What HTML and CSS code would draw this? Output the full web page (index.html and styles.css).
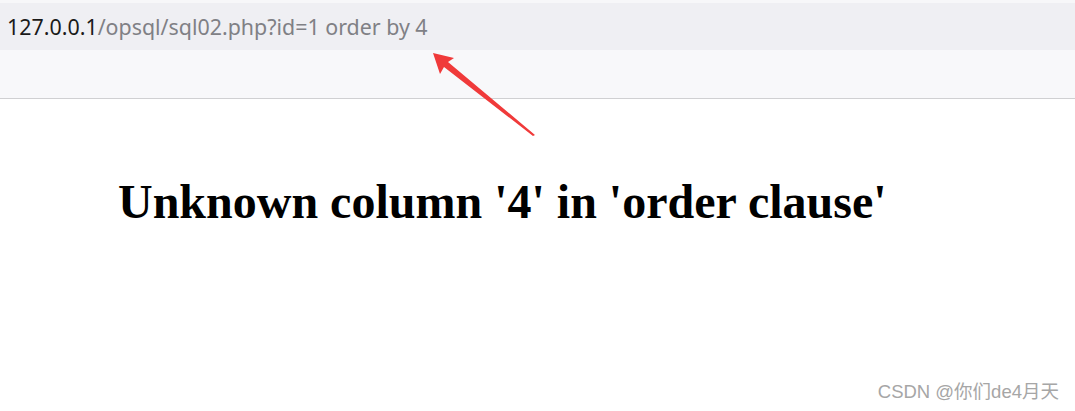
FILE: index.html
```html
<!DOCTYPE html>
<html lang="en">
<head>
    <meta charset="UTF-8">
    <title>sql02</title>
    <link rel="stylesheet" href="styles.css">
</head>
<body>
    <div class="browser">
        <div class="top-strip"></div>
        <div class="address-bar">
            <span class="host">127.0.0.1</span><span class="path">/opsql/sql02.php?id=1 order by 4</span>
        </div>
        <div class="toolbar"></div>
    </div>
    <div class="page">
        <h1>Unknown column '4' in 'order clause'</h1>
    </div>
    <svg class="arrow" width="120" height="100" viewBox="0 0 120 100">
        <polygon points="1,1 22,6 16,10 103,83 101,84 12,15 8,22" fill="#f03a3a"/>
    </svg>
    <div class="watermark">CSDN @你们de4月天</div>
</body>
</html>
```

FILE: styles.css
```css
body {
    margin: 0;
    padding: 0;
    background-color: #ffffff;
    width: 1075px;
    height: 411px;
    overflow: hidden;
    position: relative;
}
.browser {
    display: flex;
    flex-direction: column;
}
.top-strip {
    height: 3px;
    background-color: #f7f7f9;
}
.address-bar {
    height: 47px;
    background-color: #efeff3;
    display: flex;
    align-items: center;
    padding-left: 7px;
    font-family: "Noto Sans", "Noto Sans CJK SC", sans-serif;
    font-size: 21.4px;
}
.host {
    color: #1a1a1a;
}
.path {
    color: #808085;
}
.toolbar {
    height: 48px;
    background-color: #f8f8fa;
    border-bottom: 1px solid #d0d0d2;
}
.page {
    padding-left: 118px;
    padding-top: 78px;
}
h1 {
    margin: 0;
    font-family: "Liberation Serif", serif;
    font-weight: bold;
    font-size: 48px;
    line-height: 50px;
    color: #000;
}
.arrow {
    position: absolute;
    left: 432px;
    top: 52px;
}
.watermark {
    position: absolute;
    right: 16px;
    bottom: 8px;
    font-family: "Liberation Sans", "Noto Sans CJK SC", sans-serif;
    font-size: 18.5px;
    color: #a6a6a6;
}
```
